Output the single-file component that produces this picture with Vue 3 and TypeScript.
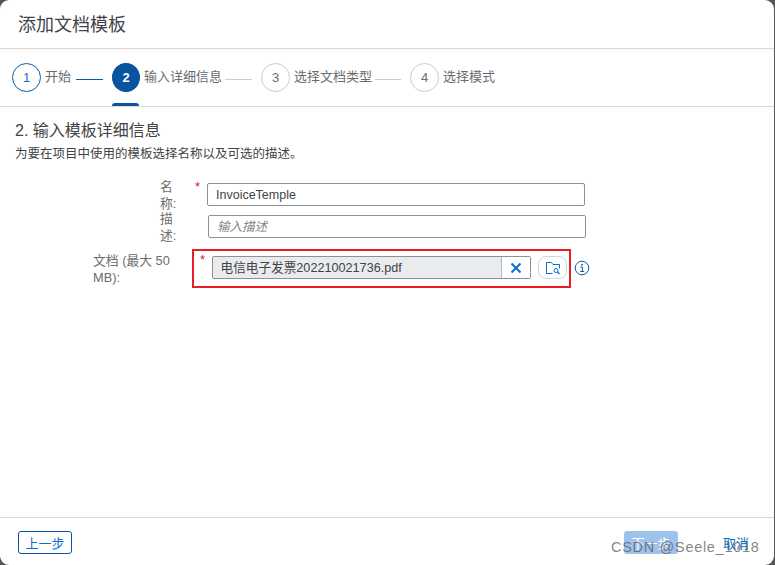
<script setup lang="ts">
interface Step {
  num: number;
  title: string;
  state: "done" | "active" | "todo";
  lineWidth: number;
}

const steps: Step[] = [
  { num: 1, title: "开始", state: "done", lineWidth: 27 },
  { num: 2, title: "输入详细信息", state: "active", lineWidth: 27 },
  { num: 3, title: "选择文档类型", state: "todo", lineWidth: 26 },
  { num: 4, title: "选择模式", state: "todo", lineWidth: 0 },
];
</script>

<template>
  <div class="backdrop">
    <div class="dialog">
      <header class="title-bar">添加文档模板</header>

      <nav class="steps">
        <div v-for="step in steps" :key="step.num" class="step" :class="step.state">
          <span class="circle">{{ step.num }}</span>
          <span class="step-title">{{ step.title }}</span>
          <span v-if="step.lineWidth" class="line" :style="{ width: step.lineWidth + 'px' }"></span>
        </div>
      </nav>

      <main class="content">
        <h2 class="heading">2. 输入模板详细信息</h2>
        <p class="desc">为要在项目中使用的模板选择名称以及可选的描述。</p>

        <div class="form">
          <div class="row row-name">
            <label class="label narrow">名称:</label>
            <span class="req">*</span>
            <div class="input">InvoiceTemple</div>
          </div>
          <div class="row row-desc">
            <label class="label narrow">描述:</label>
            <div class="input placeholder">输入描述</div>
          </div>
          <div class="row row-doc">
            <label class="label wide">文档 (最大 50 MB):</label>
            <div class="highlight">
              <span class="req">*</span>
              <div class="file-input">
                <span class="file-name">电信电子发票202210021736.pdf</span>
                <button class="clear" type="button">
                  <svg width="12" height="12" viewBox="0 0 12 12">
                    <path d="M1.5 1.5l9 9M10.5 1.5l-9 9" stroke="#0a6ed1" stroke-width="2" fill="none" />
                  </svg>
                </button>
              </div>
              <button class="browse" type="button">
                <svg width="16" height="14" viewBox="0 0 16 14" fill="none" stroke="#0a6ed1" stroke-width="1">
                  <path d="M1.5 12.5V1.5h5l1.5 2h6.5v4" />
                  <path d="M1.5 12.5h6" />
                  <circle cx="11" cy="9.5" r="2" />
                  <path d="M12.5 11l2 2" stroke-width="1.4" />
                </svg>
              </button>
            </div>
            <svg class="info" width="16" height="16" viewBox="0 0 16 16" fill="none">
              <circle cx="8" cy="8" r="6.8" stroke="#0a5cad" stroke-width="1" />
              <circle cx="8" cy="4.7" r="0.9" fill="#0a5cad" />
              <path d="M6.4 7.1H8.3V11.3M6.2 11.5H10.2" stroke="#0a5cad" stroke-width="1" />
            </svg>
          </div>
        </div>
      </main>

      <footer class="footer">
        <button class="btn-prev" type="button">上一步</button>
        <div class="footer-right">
          <button class="btn-next" type="button">下一步</button>
          <button class="btn-cancel" type="button">取消</button>
        </div>
      </footer>
    </div>
    <span class="watermark">CSDN @Seele_1018</span>
  </div>
</template>

<style>
html,
body {
  margin: 0;
  background: #555;
}
</style>

<style scoped>
.backdrop {
  position: relative;
  width: 775px;
  height: 565px;
  background: #555;
  overflow: hidden;
  font-family: "Liberation Sans", "Noto Sans CJK SC", sans-serif;
}

.dialog {
  display: flex;
  flex-direction: column;
  width: 774px;
  height: 565px;
  background: #fff;
  border-radius: 9px;
  overflow: hidden;
}

.title-bar {
  height: 49px;
  box-sizing: border-box;
  padding: 13px 0 0 18px;
  font-size: 18px;
  line-height: 24px;
  color: #3f4347;
  border-bottom: 1px solid #d9d9d9;
  flex-shrink: 0;
}

.steps {
  display: flex;
  align-items: flex-start;
  height: 58px;
  box-sizing: border-box;
  padding: 14px 0 0 12px;
  background: linear-gradient(#f8f8f8, #fff 5px);
  border-bottom: 1px solid #d9d9d9;
  flex-shrink: 0;
}

.step {
  position: relative;
  display: flex;
  align-items: flex-start;
  margin-right: 9px;
}

.circle {
  display: flex;
  align-items: center;
  justify-content: center;
  width: 29px;
  height: 29px;
  box-sizing: border-box;
  border-radius: 50%;
  border: 1px solid #ccc;
  font-size: 13px;
  color: #6a6d70;
}

.step.done .circle {
  border-color: #0a5ca8;
  color: #0a6ed1;
}

.step.active .circle {
  width: 28px;
  background: #0854a0;
  border-color: #0854a0;
  color: #fff;
  font-weight: bold;
}

.step.active::after {
  content: "";
  position: absolute;
  left: 0;
  bottom: -14px;
  width: 27px;
  height: 3px;
  background: #0854a0;
  border-radius: 3px 3px 0 0;
}

.step-title {
  margin-left: 4px;
  font-size: 13px;
  line-height: 27px;
  color: #6a6d70;
}

.line {
  height: 1px;
  margin: 16px 0 0 3px;
  background: #ccc;
}

.step.done .line {
  margin-left: 5px;
  background: #0a5ca8;
}

.content {
  flex: 1;
  padding: 14px 15px 0;
}

.heading {
  margin: 0;
  font-size: 16px;
  font-weight: normal;
  line-height: 20px;
  color: #3f4347;
}

.desc {
  margin: 5px 0 0;
  font-size: 12.5px;
  line-height: 16px;
  color: #3f4347;
}

.form {
  margin-top: 21px;
}

.row {
  position: relative;
  display: flex;
  align-items: flex-start;
  height: 23px;
}

.label {
  flex-shrink: 0;
  font-size: 12.8px;
  line-height: 16.5px;
  color: #6a6d70;
}

.label.narrow {
  width: 20px;
  margin-left: 145px;
  margin-top: -4px;
  margin-right: -1px;
}

.label.wide {
  width: 90px;
  margin-left: 78px;
  margin-top: 4px;
  margin-right: 1px;
}

.req {
  font-size: 13px;
  line-height: 13px;
  margin-top: -3px;
  color: #d6242b;
}

.row-name .req {
  margin-left: 16px;
  width: 12px;
}

.input {
  box-sizing: border-box;
  width: 378px;
  height: 23px;
  padding: 0 8px;
  border: 1px solid #89919a;
  border-radius: 2px;
  font-size: 12.5px;
  line-height: 23px;
  color: #3f4347;
}

.input.placeholder {
  font-style: italic;
  color: #7f8386;
  margin-left: 29px;
}

.row-desc {
  margin-top: 9px;
}

.row-doc {
  margin-top: 11px;
}

.highlight {
  display: flex;
  align-items: flex-start;
  box-sizing: border-box;
  flex-shrink: 0;
  width: 379px;
  height: 39px;
  margin-left: 8px;
  padding: 5px 0 0 6px;
  border: 2px solid #ed1c24;
}

.highlight .req {
  width: 12px;
}

.file-input {
  display: flex;
  box-sizing: border-box;
  width: 319px;
  height: 23px;
  border: 1px solid #89919a;
  border-radius: 2px;
  background: #e9ebed;
}

.file-name {
  flex: 1;
  padding-left: 7.5px;
  font-size: 12.65px;
  line-height: 23px;
  color: #3f4347;
}

.clear {
  display: flex;
  align-items: center;
  justify-content: center;
  width: 29px;
  padding: 0;
  border: none;
  border-left: 1px solid #b5bac0;
  background: #fff;
}

.browse {
  display: flex;
  align-items: center;
  justify-content: center;
  box-sizing: border-box;
  width: 29px;
  height: 23px;
  margin-left: 7px;
  padding: 0;
  border: 1px solid #ccd5e0;
  border-radius: 8px;
  background: #fff;
}

.info {
  flex-shrink: 0;
  margin: 11px 0 0 3px;
}

.footer {
  display: flex;
  justify-content: space-between;
  align-items: flex-start;
  height: 48px;
  box-sizing: border-box;
  padding: 13px 24px 0 18px;
  border-top: 1px solid #d9d9d9;
  flex-shrink: 0;
}

.footer-right {
  display: flex;
  gap: 44px;
}

.btn-prev,
.btn-next,
.btn-cancel {
  height: 23px;
  padding: 0;
  font-family: inherit;
  font-size: 13px;
  border-radius: 3px;
}

.btn-prev {
  width: 54px;
  background: #fff;
  border: 1px solid #0854a0;
  color: #0a6ed1;
}

.btn-next {
  width: 54px;
  background: #9dc3ec;
  border: none;
  color: #fff;
}

.btn-cancel {
  width: 28px;
  background: none;
  border: none;
  color: #0a6ed1;
}

.watermark {
  position: absolute;
  left: 611px;
  top: 539px;
  font-size: 14.5px;
  letter-spacing: 0.7px;
  color: rgba(90, 90, 90, 0.75);
}
</style>
